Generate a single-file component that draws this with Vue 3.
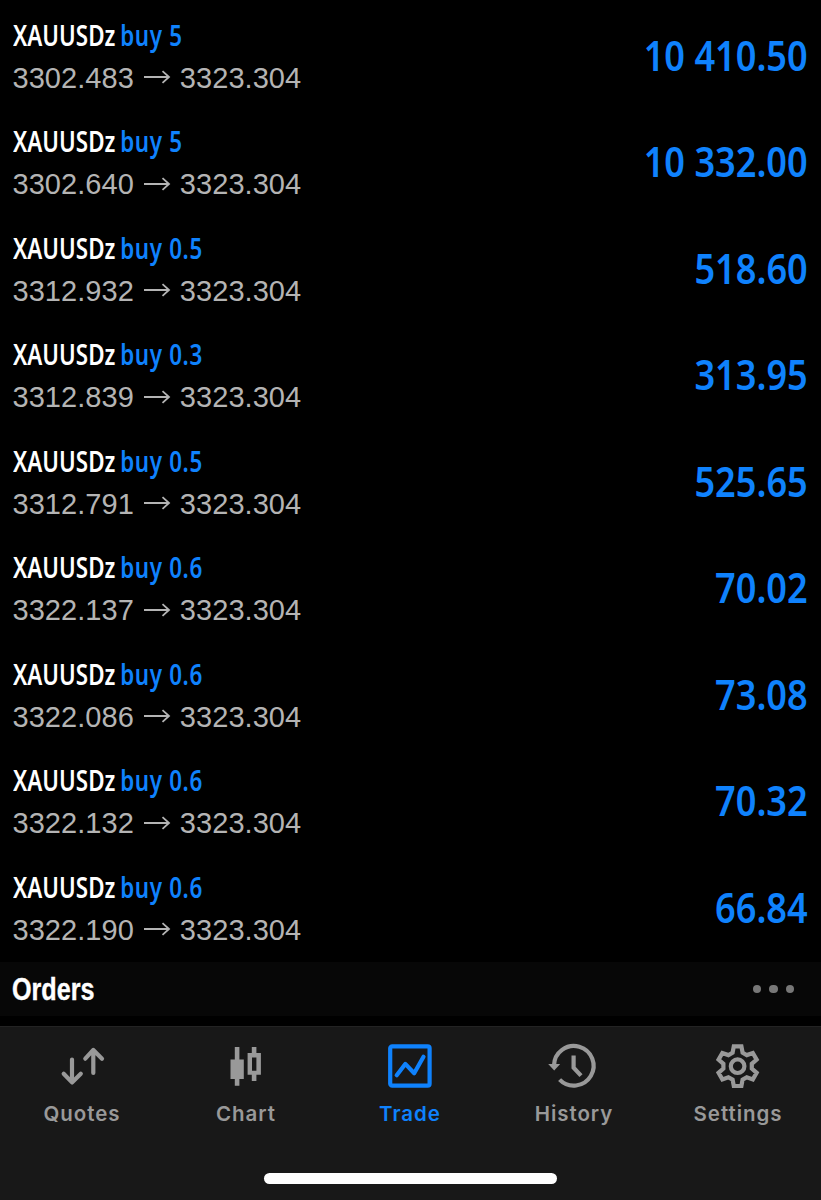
<template>
  <div class="screen">
    <ul class="positions">
      <li v-for="(p, i) in positions" :key="i" class="position">
        <div class="info">
          <div class="title">
            <span class="symbol">{{ p.symbol }}</span>
            <span class="side">buy {{ p.volume }}</span>
          </div>
          <div class="prices">
            <span>{{ p.open }}</span>
            <svg class="arrow" width="28" height="16" viewBox="0 0 28 16">
              <path d="M1 8H26M19.5 2.2L26 8L19.5 13.8" />
            </svg>
            <span>{{ p.current }}</span>
          </div>
        </div>
        <div class="profit">{{ p.profit }}</div>
      </li>
    </ul>

    <div class="orders">
      <h2>Orders</h2>
      <button class="more" aria-label="More"><i></i><i></i><i></i></button>
    </div>

    <nav class="tabbar">
      <div class="tabs">
        <a class="tab">
          <svg class="icon" viewBox="0 0 48 48">
            <g class="line round">
              <path d="M14 17.5V40M5.7 31.7L14 40.4L22.8 31.7" />
              <path d="M35.3 31V8M27.3 16.7L35.3 7.9L44 16.7" />
            </g>
          </svg>
          <span>Quotes</span>
        </a>
        <a class="tab">
          <svg class="icon" viewBox="0 0 48 48">
            <path class="fill" d="M12.8 5h4.6v12.6h4.4V37h-4.4v6.7h-4.6V37H8.5V17.6h4.3z" />
            <path class="fill" fill-rule="evenodd" d="M29.8 5h4.6v6h4.5v21.7h-4.5V39h-4.6v-6.3h-4.2V11h4.2zM30 15.6v13.1h4.4V15.6z" />
          </svg>
          <span>Chart</span>
        </a>
        <a class="tab active">
          <svg class="icon" viewBox="0 0 48 48">
            <rect class="line" x="4.2" y="4.3" width="39.4" height="39.4" rx="2" />
            <path class="line round" d="M10.7 33.2L19.3 21.9L28.2 31.2L37.5 14.8" />
          </svg>
          <span>Trade</span>
        </a>
        <a class="tab">
          <svg class="icon" viewBox="0 0 48 48">
            <path class="line" d="M9.6 37.6A19.8 19.8 0 1 0 4 23.4" />
            <path class="fill" d="M-1.8 22h12L4.2 28.4z" />
            <path class="line" d="M23.6 13.4V25.6L31 33.6" />
          </svg>
          <span>History</span>
        </a>
        <a class="tab">
          <svg class="icon" viewBox="0 0 48 48">
            <g transform="translate(23.6 24.2)">
              <path class="line" d="M-3.8 -19.8H3.8L5 -13.5L9.2 -11.1L15.25 -13.2L19.05 -6.6L14.2 -2.4V2.4L19.05 6.6L15.25 13.2L9.2 11.1L5 13.5L3.8 19.8H-3.8L-5 13.5L-9.2 11.1L-15.25 13.2L-19.05 6.6L-14.2 2.4V-2.4L-19.05 -6.6L-15.25 -13.2L-9.2 -11.1L-5 -13.5Z" />
              <circle class="line" r="6.8" />
            </g>
          </svg>
          <span>Settings</span>
        </a>
      </div>
      <div class="home-indicator"></div>
    </nav>
  </div>
</template>

<script setup>
import { ref } from 'vue'

const positions = ref([
  { symbol: 'XAUUSDz', volume: '5',   open: '3302.483', current: '3323.304', profit: '10 410.50' },
  { symbol: 'XAUUSDz', volume: '5',   open: '3302.640', current: '3323.304', profit: '10 332.00' },
  { symbol: 'XAUUSDz', volume: '0.5', open: '3312.932', current: '3323.304', profit: '518.60' },
  { symbol: 'XAUUSDz', volume: '0.3', open: '3312.839', current: '3323.304', profit: '313.95' },
  { symbol: 'XAUUSDz', volume: '0.5', open: '3312.791', current: '3323.304', profit: '525.65' },
  { symbol: 'XAUUSDz', volume: '0.6', open: '3322.137', current: '3323.304', profit: '70.02' },
  { symbol: 'XAUUSDz', volume: '0.6', open: '3322.086', current: '3323.304', profit: '73.08' },
  { symbol: 'XAUUSDz', volume: '0.6', open: '3322.132', current: '3323.304', profit: '70.32' },
  { symbol: 'XAUUSDz', volume: '0.6', open: '3322.190', current: '3323.304', profit: '66.84' },
])
</script>

<style>
body {
  margin: 0;
  background: #000;
}
</style>

<style scoped>
.screen {
  width: 821px;
  height: 1200px;
  display: flex;
  flex-direction: column;
  background: #000;
  overflow: hidden;
}

.positions {
  list-style: none;
  margin: 0;
  padding: 3.5px 0 0;
  height: 958.5px;
}

.position {
  height: 106.5px;
  box-sizing: border-box;
  padding: 11px 13px 0 12.5px;
  display: flex;
  justify-content: space-between;
}

.title {
  height: 40px;
  line-height: 40px;
  font-family: 'Noto Sans', sans-serif;
  font-size: 28px;
  font-weight: 600;
  white-space: nowrap;
  display: flex;
  gap: 6px;
  transform: scaleX(0.8);
  transform-origin: left;
}

.symbol {
  color: #fff;
}

.side {
  color: #0f82fd;
  letter-spacing: 0.8px;
}

.prices {
  display: flex;
  align-items: center;
  height: 42px;
  padding-top: 2.5px;
  font-family: 'Liberation Sans', Arial, sans-serif;
  font-size: 29px;
  letter-spacing: 0.05px;
  color: #b4b4b4;
}

.arrow {
  margin: -2px 9px 0;
  fill: none;
  stroke: #b4b4b4;
  stroke-width: 1.8;
}

.profit {
  height: 80px;
  line-height: 80px;
  font-family: 'Noto Sans', sans-serif;
  font-size: 42px;
  font-weight: 600;
  color: #0f82fd;
  white-space: nowrap;
  transform: scaleX(0.86);
  transform-origin: right;
}

.orders {
  height: 54px;
  padding: 0 27px 0 12px;
  display: flex;
  align-items: center;
  justify-content: space-between;
  background: #070707;
}

.orders h2 {
  margin: 0;
  font-family: 'Liberation Sans', Arial, sans-serif;
  font-size: 32px;
  font-weight: 700;
  color: #fff;
  -webkit-text-stroke: 0.4px #fff;
  transform: scaleX(0.785);
  transform-origin: left;
}

.more {
  display: flex;
  gap: 8px;
  padding: 0;
  border: none;
  background: none;
}

.more i {
  width: 8.5px;
  height: 8.5px;
  border-radius: 50%;
  background: #777;
}

.tabbar {
  margin-top: 10px;
  height: 174px;
  box-sizing: border-box;
  border-top: 1px solid #232323;
  background: #181818;
  display: flex;
  flex-direction: column;
  align-items: center;
}

.tabs {
  width: 100%;
  height: 146px;
  box-sizing: border-box;
  padding-right: 1px;
  display: flex;
}

.tab {
  flex: 1;
  display: flex;
  flex-direction: column;
  align-items: center;
  padding-top: 15px;
  color: #999;
  font-family: Inter, sans-serif;
  font-size: 20.5px;
  font-weight: 600;
  line-height: 24px;
  letter-spacing: 0.95px;
}

.tab.active {
  color: #0f82fd;
}

.icon {
  width: 48px;
  height: 48px;
  margin-bottom: 12px;
  overflow: visible;
}

.line {
  fill: none;
  stroke: currentColor;
  stroke-width: 4.2;
}

.round {
  stroke-linecap: round;
  stroke-linejoin: round;
}

.fill {
  fill: currentColor;
}

.home-indicator {
  width: 293px;
  height: 11px;
  border-radius: 6px;
  background: #fff;
}
</style>
